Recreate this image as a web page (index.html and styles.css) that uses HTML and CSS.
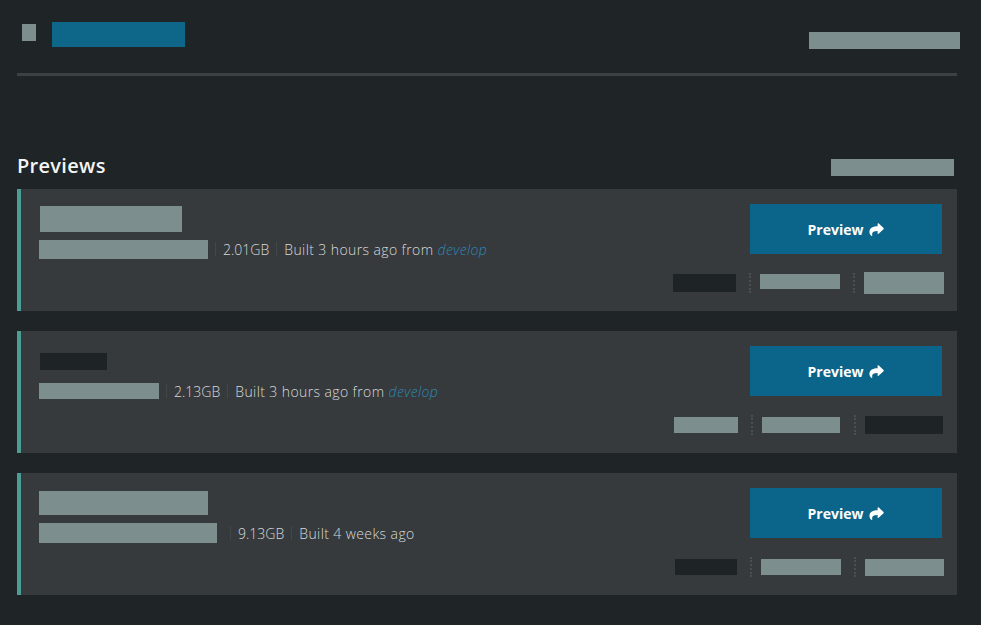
FILE: index.html
```html
<!DOCTYPE html>
<html lang="en">
<head>
<meta charset="utf-8">
<title>Previews</title>
<link rel="stylesheet" href="styles.css">
</head>
<body>
<div class="page">
  <header class="topbar">
    <span class="r r-icon"></span>
    <span class="r r-brand"></span>
    <span class="r r-user"></span>
  </header>
  <div class="rule"></div>

  <div class="section-head">
    <h2 class="section-title">Previews</h2>
    <span class="r r-headlink"></span>
  </div>

  <div class="cards">
    <article class="card">
      <div class="card-main">
        <div class="card-title"><span class="r gray t1"></span></div>
        <div class="meta">
          <span class="r gray m1"></span>
          <span class="meta-sep"></span>
          <span class="meta-text">2.01GB</span>
          <span class="meta-sep"></span>
          <span class="meta-text built">Built 3 hours ago from <em class="branch">develop</em></span>
        </div>
      </div>
      <div class="card-side">
        <button class="btn-preview">Preview
          <svg class="share" viewBox="0 0 16 14" aria-hidden="true"><path d="M15.6 5.3 10.2 0.4C9.8 0 9.2 0.3 9.2 0.8V3.4C4.6 3.5 0.4 4.6 0.4 9.6c0 2 1.1 3.6 2.4 4.3.4.2.8-.1.7-.5C2.7 10.3 4.2 8.7 9.2 8.6v2.7c0 .5.6.8 1 .4l5.4-4.9c.3-.4.3-1.1 0-1.5z"/></svg>
        </button>
        <div class="actions">
          <span class="r dark a1"></span>
          <span class="act-sep"></span>
          <span class="r gray a2"></span>
          <span class="act-sep"></span>
          <span class="r gray a3"></span>
        </div>
      </div>
    </article>

    <article class="card">
      <div class="card-main">
        <div class="card-title"><span class="r dark t2"></span></div>
        <div class="meta">
          <span class="r gray m2"></span>
          <span class="meta-sep"></span>
          <span class="meta-text">2.13GB</span>
          <span class="meta-sep"></span>
          <span class="meta-text built">Built 3 hours ago from <em class="branch">develop</em></span>
        </div>
      </div>
      <div class="card-side">
        <button class="btn-preview">Preview
          <svg class="share" viewBox="0 0 16 14" aria-hidden="true"><path d="M15.6 5.3 10.2 0.4C9.8 0 9.2 0.3 9.2 0.8V3.4C4.6 3.5 0.4 4.6 0.4 9.6c0 2 1.1 3.6 2.4 4.3.4.2.8-.1.7-.5C2.7 10.3 4.2 8.7 9.2 8.6v2.7c0 .5.6.8 1 .4l5.4-4.9c.3-.4.3-1.1 0-1.5z"/></svg>
        </button>
        <div class="actions">
          <span class="r gray b1"></span>
          <span class="act-sep"></span>
          <span class="r gray b2"></span>
          <span class="act-sep"></span>
          <span class="r dark b3"></span>
        </div>
      </div>
    </article>

    <article class="card">
      <div class="card-main">
        <div class="card-title"><span class="r gray t3"></span></div>
        <div class="meta">
          <span class="r gray m3"></span>
          <span class="meta-sep"></span>
          <span class="meta-text">9.13GB</span>
          <span class="meta-sep"></span>
          <span class="meta-text built">Built 4 weeks ago</span>
        </div>
      </div>
      <div class="card-side">
        <button class="btn-preview">Preview
          <svg class="share" viewBox="0 0 16 14" aria-hidden="true"><path d="M15.6 5.3 10.2 0.4C9.8 0 9.2 0.3 9.2 0.8V3.4C4.6 3.5 0.4 4.6 0.4 9.6c0 2 1.1 3.6 2.4 4.3.4.2.8-.1.7-.5C2.7 10.3 4.2 8.7 9.2 8.6v2.7c0 .5.6.8 1 .4l5.4-4.9c.3-.4.3-1.1 0-1.5z"/></svg>
        </button>
        <div class="actions">
          <span class="r dark c1"></span>
          <span class="act-sep"></span>
          <span class="r gray c2"></span>
          <span class="act-sep"></span>
          <span class="r gray c3"></span>
        </div>
      </div>
    </article>
  </div>
</div>
</body>
</html>
```

FILE: styles.css
```css
* { box-sizing: border-box; }

html, body {
  margin: 0;
  padding: 0;
  background: #1f2427;
}

body {
  font-family: "Open Sans", "Liberation Sans", sans-serif;
  color: #d3d6d6;
}

.page {
  width: 940px;
  margin-left: 17px;
}

/* redacted placeholder blocks */
.r { display: block; flex: none; }
.gray { background: #7d8e8f; }
.dark { background: #1e2326; }

.topbar {
  display: flex;
  align-items: flex-start;
  height: 73px;
}
.r-icon {
  width: 14px;
  height: 17px;
  margin: 24px 0 0 5px;
  background: #7d8e8f;
}
.r-brand {
  width: 133px;
  height: 25px;
  margin: 22px 0 0 16px;
  background: #0e6689;
}
.r-user {
  width: 151px;
  height: 17px;
  margin: 32px -3px 0 auto;
  background: #7d8e8f;
}
.rule {
  height: 3px;
  background: #3c4144;
}

.section-head {
  display: flex;
  align-items: center;
  justify-content: space-between;
  height: 30px;
  margin-top: 75px;
}
.section-title {
  margin: 0;
  font-size: 20px;
  font-weight: 600;
  line-height: 30px;
  letter-spacing: 0.3px;
  color: #f3f4f4;
}
.r-headlink {
  width: 123px;
  height: 17px;
  margin-top: 3px;
  margin-right: 3px;
  background: #7d8e8f;
}

.cards {
  display: flex;
  flex-direction: column;
  gap: 20px;
  margin-top: 8px;
}

.card {
  display: flex;
  height: 122px;
  padding: 15px 13px 0 18px;
  background: #363a3d;
  border-left: 4px solid #4a9e96;
}

.card-main {
  flex: 1;
  min-width: 0;
}
.card-title {
  display: flex;
  align-items: center;
  height: 30px;
  padding-left: 1px;
}
.meta {
  display: flex;
  align-items: center;
  height: 22px;
  margin-top: 4px;
  font-size: 14px;
  font-weight: 300;
  white-space: nowrap;
}
.meta-sep {
  width: 1px;
  height: 14px;
  margin: 0 7px;
  background: #42474a;
}
.meta-text { color: #d6d9d9; }
.built { letter-spacing: 0.4px; }
.branch {
  font-style: italic;
  color: #2d88b3;
}

.card-side {
  display: flex;
  flex-direction: column;
  align-items: flex-end;
}
.btn-preview {
  display: flex;
  align-items: center;
  justify-content: center;
  gap: 6px;
  width: 192px;
  height: 50px;
  margin-right: 2px;
  border: 0;
  padding: 0;
  background: #0b6489;
  color: #ffffff;
  font-family: "Open Sans", "Liberation Sans", sans-serif;
  font-size: 14px;
  font-weight: 700;
}
.share {
  width: 15px;
  height: 13px;
  fill: #ffffff;
}

.actions {
  display: flex;
  align-items: center;
  height: 24px;
  margin-top: 17px;
}
.act-sep {
  width: 2px;
  height: 20px;
  margin: 0 9px 0 13px;
  border-left: 2px dotted #4a4f52;
}

/* card 1 */
.t1 { width: 142px; height: 26px; }
.m1 { width: 169px; height: 19px; }
.a1 { width: 63px; height: 18px; }
.a2 { width: 80px; height: 15px; margin-top: -4px; }
.a3 { width: 80px; height: 22px; }

/* card 2 */
.t2 { width: 67px; height: 17px; }
.m2 { width: 120px; height: 16px; }
.b1 { width: 64px; height: 16px; }
.b2 { width: 78px; height: 16px; margin-right: 1px; }
.b3 { width: 78px; height: 18px; margin-right: 1px; }

/* card 3 */
.t3 { width: 169px; height: 24px; margin-left: -1px; }
.m3 { width: 178px; height: 20px; margin-right: 6px; }
.c1 { width: 62px; height: 16px; }
.c2 { width: 80px; height: 16px; }
.c3 { width: 79px; height: 17px; }
```
